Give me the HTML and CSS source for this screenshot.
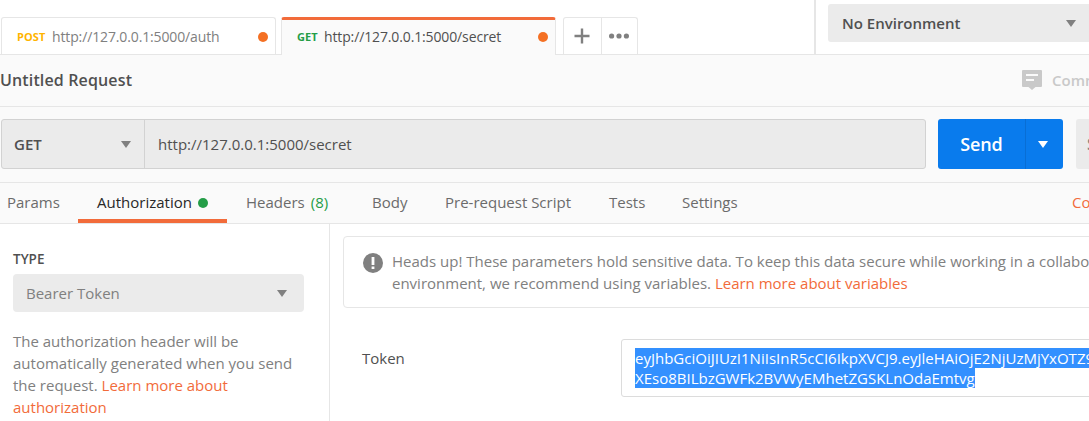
FILE: index.html
```html
<!DOCTYPE html>
<html lang="en">
<head>
<meta charset="utf-8">
<title>Untitled Request</title>
<link rel="stylesheet" href="styles.css">
</head>
<body>
<div class="app">
  <header class="topbar">
    <div class="tabs">
      <div class="tab"><span class="verb post">POST</span><span class="tab-url">http://127.0.0.1:5000/auth</span><i class="unsaved"></i></div>
      <div class="tab active"><span class="verb get">GET</span><span class="tab-url">http://127.0.0.1:5000/secret</span><i class="unsaved"></i></div>
      <div class="tab-actions">
        <button class="tab-btn"><svg width="16" height="16" viewBox="0 0 16 16"><path d="M8 .5v15M.5 8h15" stroke="#808080" stroke-width="2.4"/></svg></button>
        <button class="tab-btn"><svg width="20" height="6" viewBox="0 0 20 6" fill="#808080"><circle cx="2.6" cy="3" r="2.6"/><circle cx="10" cy="3" r="2.6"/><circle cx="17.4" cy="3" r="2.6"/></svg></button>
      </div>
    </div>
    <div class="env">
      <div class="env-select"><span class="env-name">No Environment</span><svg class="caret" width="10" height="7" viewBox="0 0 10 7"><path d="M0 0h10L5 7z"/></svg></div>
    </div>
  </header>
  <section class="title-row">
    <h1 class="title">Untitled Request</h1>
    <div class="comments">
      <svg width="20" height="20" viewBox="0 0 20 20"><path d="M1 0h18a1 1 0 0 1 1 1v15a1 1 0 0 1-1 1h-5.500L10 20l-3.500-3H1a1 1 0 0 1-1-1V1a1 1 0 0 1 1-1z" fill="#c9c9c9"/><path d="M4 4h12v2H4zM4 9h8v2H4z" fill="#fafafa"/></svg>
      <span class="comments-label">Comments</span>
    </div>
  </section>
  <section class="request-row">
    <div class="request-box">
      <div class="method"><span class="method-name">GET</span><svg class="caret" width="10" height="7" viewBox="0 0 10 7"><path d="M0 0h10L5 7z"/></svg></div>
      <div class="url"><span class="url-text">http://127.0.0.1:5000/secret</span></div>
    </div>
    <div class="send">
      <div class="send-main"><span class="send-label">Send</span></div>
      <div class="send-more"><svg class="caret white" width="10" height="7" viewBox="0 0 10 7"><path d="M0 0h10L5 7z"/></svg></div>
    </div>
    <div class="save">Save</div>
  </section>
  <nav class="sections">
    <div class="section params"><span>Params</span></div>
    <div class="section auth"><span class="auth-label">Authorization</span><i class="dot"></i></div>
    <div class="section headers"><span>Headers</span><span class="count">(8)</span></div>
    <div class="section body-tab"><span>Body</span></div>
    <div class="section pre"><span>Pre-request Script</span></div>
    <div class="section tests"><span>Tests</span></div>
    <div class="section settings"><span>Settings</span></div>
    <a class="cookies">Cookies</a>
  </nav>
  <main class="main">
    <aside class="sidebar">
      <div class="type">TYPE</div>
      <div class="type-select"><span>Bearer Token</span><svg class="caret" width="10" height="7" viewBox="0 0 10 7"><path d="M0 0h10L5 7z"/></svg></div>
      <p class="help">The authorization header will be<br>automatically generated when you send<br>the request. <a class="link">Learn more about<br>authorization</a></p>
    </aside>
    <div class="content">
      <div class="notice">
        <svg class="notice-icon" width="20" height="20" viewBox="0 0 20 20"><circle cx="10" cy="10" r="10" fill="#808080"/><path d="M8.600 4h2.800v8H8.600zM8.600 13.500h2.800v2.500H8.600z" fill="#fff"/></svg>
        <p class="notice-text">Heads up! These parameters hold sensitive data. To keep this data secure while working in a collaborative<br>environment, we recommend using variables. <a class="link">Learn more about variables</a></p>
      </div>
      <div class="field">
        <span class="field-label">Token</span>
        <div class="token"><span class="selected">eyJhbGciOiJIUzI1NiIsInR5cCI6IkpXVCJ9.eyJleHAiOjE2NjUzMjYxOTZ9.</span><br><span class="selected">XEso8BILbzGWFk2BVWyEMhetZGSKLnOdaEmtvg</span></div>
      </div>
    </div>
  </main>
</div>
</body>
</html>
```
FILE: styles.css
```css
* { box-sizing: border-box; }
body { margin: 0; overflow: hidden; background: #fff; color: #505050; font: 15px/22px "Open Sans", "Noto Sans", sans-serif; }
.app { width: 1089px; height: 421px; overflow: hidden; display: flex; flex-direction: column; white-space: nowrap; }
svg { display: block; flex: none; }
.caret { fill: #808080; }
.caret.white { fill: #fff; }
.topbar { height: 55px; flex: none; display: flex; border-bottom: 1px solid #e6e6e6; }
.tabs { width: 814px; flex: none; display: flex; align-items: flex-end; padding-left: 1px; }
.tab { width: 275px; height: 37px; flex: none; display: flex; align-items: center; padding: 2px 7px 0 15px; border: 1px solid #e6e6e6; border-bottom: 0; border-radius: 3px 3px 0 0; color: #808080; font-size: 14px; }
.tab.active { margin: 0 7px -1px 5px; height: 38px; padding: 0 7px 1px 15px; border-top: 3px solid #f26b3a; background: #fafafa; color: #505050; }
.tab-url { letter-spacing: -0.13px; }
.verb { width: 28px; margin-right: 7px; font-size: 11px; font-weight: 700; letter-spacing: 0.1px; }
.verb.get { width: 20px; }
.post { color: #ffb400; }
.get { color: #249d47; }
.unsaved { width: 10px; height: 10px; margin-left: auto; border-radius: 50%; background: #f47023; }
.tab-actions { display: flex; width: 75px; height: 37px; border: 1px solid #e6e6e6; border-bottom: 0; border-radius: 3px 3px 0 0; }
.tab-btn { width: 37px; flex: none; padding: 0 1px 1px 0; border: 0; background: none; display: flex; align-items: center; justify-content: center; }
.tab-btn + .tab-btn { border-left: 1px solid #e6e6e6; padding-right: 2px; }
.env { flex: none; width: 290px; padding: 4px 0 0 12px; border-left: 2px solid #e6e6e6; }
.env-select { height: 38px; padding: 0 28px 0 14px; display: flex; align-items: center; justify-content: space-between; background: #ebebeb; border-radius: 3px; font-weight: 600; }
.title-row { height: 52px; flex: none; display: flex; align-items: center; padding-bottom: 2px; background: #fafafa; border-bottom: 1px solid #e6e6e6; }
.title { margin: 0; width: 1022px; flex: none; font-size: 16px; font-weight: 600; letter-spacing: 0.14px; }
.comments { display: flex; align-items: center; gap: 10px; color: #c9c9c9; font-weight: 600; }
.request-row { height: 75px; flex: none; display: flex; padding: 12px 0 13px 1px; background: #fafafa; }
.request-box { width: 925px; flex: none; display: flex; background: #ebebeb; border: 1px solid #d2d2d2; border-radius: 3px; }
.method { width: 143px; flex: none; display: flex; align-items: center; justify-content: space-between; padding: 0 13px 0 12px; border-right: 1px solid #d2d2d2; font-weight: 600; }
.url { display: flex; align-items: center; padding-left: 13px; }
.send { width: 125px; margin-left: 12px; flex: none; display: flex; overflow: hidden; border-radius: 3px; background: #097bed; color: #fff; font-size: 18px; font-weight: 600; letter-spacing: -0.15px; }
.send-main { width: 87px; display: flex; align-items: center; justify-content: center; }
.send-more { width: 38px; display: flex; align-items: center; justify-content: center; padding-right: 3px; border-left: 1px solid #086ed5; }
.save { margin-left: 13px; width: 80px; flex: none; padding: 14px 0 0 11px; background: #ebebeb; border-radius: 3px; font-weight: 600; font-size: 17px; color: #808080; }
.sections { height: 42px; flex: none; display: flex; background: #fafafa; border-top: 1px solid #e6e6e6; border-bottom: 1px solid #e6e6e6; color: #6b6b6b; }
.section { flex: none; display: flex; align-items: center; height: 40px; padding-bottom: 2px; }
.params { width: 78px; padding-left: 7px; }
.auth { width: 149px; padding: 2px 0 0 19px; gap: 6px; color: #282828; border-bottom: 4px solid #f26b3a; }
.dot { width: 10px; height: 10px; margin-top: 1px; border-radius: 50%; background: #249d47; }
.headers { width: 145px; padding-left: 19px; gap: 6px; }
.count { color: #249d47; }
.body-tab { width: 73px; }
.pre { width: 164px; }
.tests { width: 73px; }
.settings { width: 390px; }
.cookies { line-height: 38px; color: #f26b3a; }
.main { flex: 1; display: flex; min-height: 0; }
.sidebar { width: 330px; flex: none; padding: 24px 25px 0 13px; border-right: 1px solid #e6e6e6; }
.type { font-size: 13.5px; font-weight: 600; }
.type-select { height: 38px; margin-top: 4px; padding: 0 17px 0 13px; display: flex; align-items: center; justify-content: space-between; background: #ebebeb; border-radius: 4px; color: #808080; }
.help { margin: 18px 0 0; color: #808080; }
.link { color: #f26b3a; }
.content { width: 759px; flex: none; padding: 12px 0 0 13px; }
.notice { width: 800px; height: 72px; display: flex; padding: 13px 0 0 19px; border: 1px solid #e6e6e6; border-radius: 4px; }
.notice-icon { margin: 3px 9px 0 0; }
.notice-text { margin: 0; color: #808080; }
.field { display: flex; margin-top: 31px; padding-left: 19px; }
.field-label { width: 259px; flex: none; margin-top: 8px; }
.token { width: 500px; height: 58px; flex: none; padding: 8px 13px; border: 1px solid #dcdcdc; border-radius: 3px; line-height: 20px; }
.selected { display: inline-block; height: 20px; background: #3390ff; color: #fff; vertical-align: top; }
```
